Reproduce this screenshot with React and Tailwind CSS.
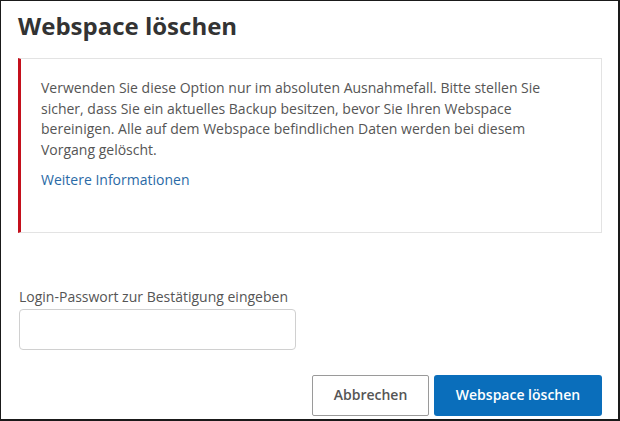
export default function App() {
  return (
    <div
      className="w-[620px] h-[421px] bg-white border-t border-l border-r-2 border-b-2 border-[#1a1a1a] overflow-hidden"
      style={{ fontFamily: '"Open Sans", "Liberation Sans", sans-serif' }}
    >
      <div className="pl-[17px] pr-[16px] pt-[10px] flex flex-col">
        <h1 className="text-[24px] leading-[30px] font-bold text-[#333333]">Webspace löschen</h1>
        <div className="mt-[17px] h-[175px] border border-[#e3e3e3] border-l-[3px] border-l-[#c4101c] pl-[20px] pr-[20px] pt-[19px] text-[14px] leading-[20.5px] text-[#555555]">
          <p>
            Verwenden Sie diese Option nur im absoluten Ausnahmefall. Bitte stellen Sie sicher, dass Sie ein aktuelles Backup besitzen, bevor Sie Ihren Webspace bereinigen. Alle auf dem Webspace befindlichen Daten werden bei diesem Vorgang gelöscht.
          </p>
          <p className="mt-[10px]">
            <a href="#" className="text-[#2a6aa6]">Weitere Informationen</a>
          </p>
        </div>
        <label className="mt-[54px] pl-[1px] text-[14px] leading-[20px] text-[#555555]">
          Login-Passwort zur Bestätigung eingeben
        </label>
        <input
          type="password"
          className="mt-[2px] ml-[1px] w-[277px] h-[41px] border border-[#d0d0d0] rounded-[4px] bg-white"
        />
        <div className="mt-[25px] flex justify-end gap-[5px]">
          <button className="w-[117px] h-[41px] pb-[2px] border border-[#9a9a9a] rounded-[2px] bg-white text-[14px] font-semibold text-[#555555]">
            Abbrechen
          </button>
          <button className="w-[168px] h-[41px] pb-[2px] rounded-[3px] bg-[#0a6ebb] text-[14px] font-semibold text-white">
            Webspace löschen
          </button>
        </div>
      </div>
    </div>
  );
}
